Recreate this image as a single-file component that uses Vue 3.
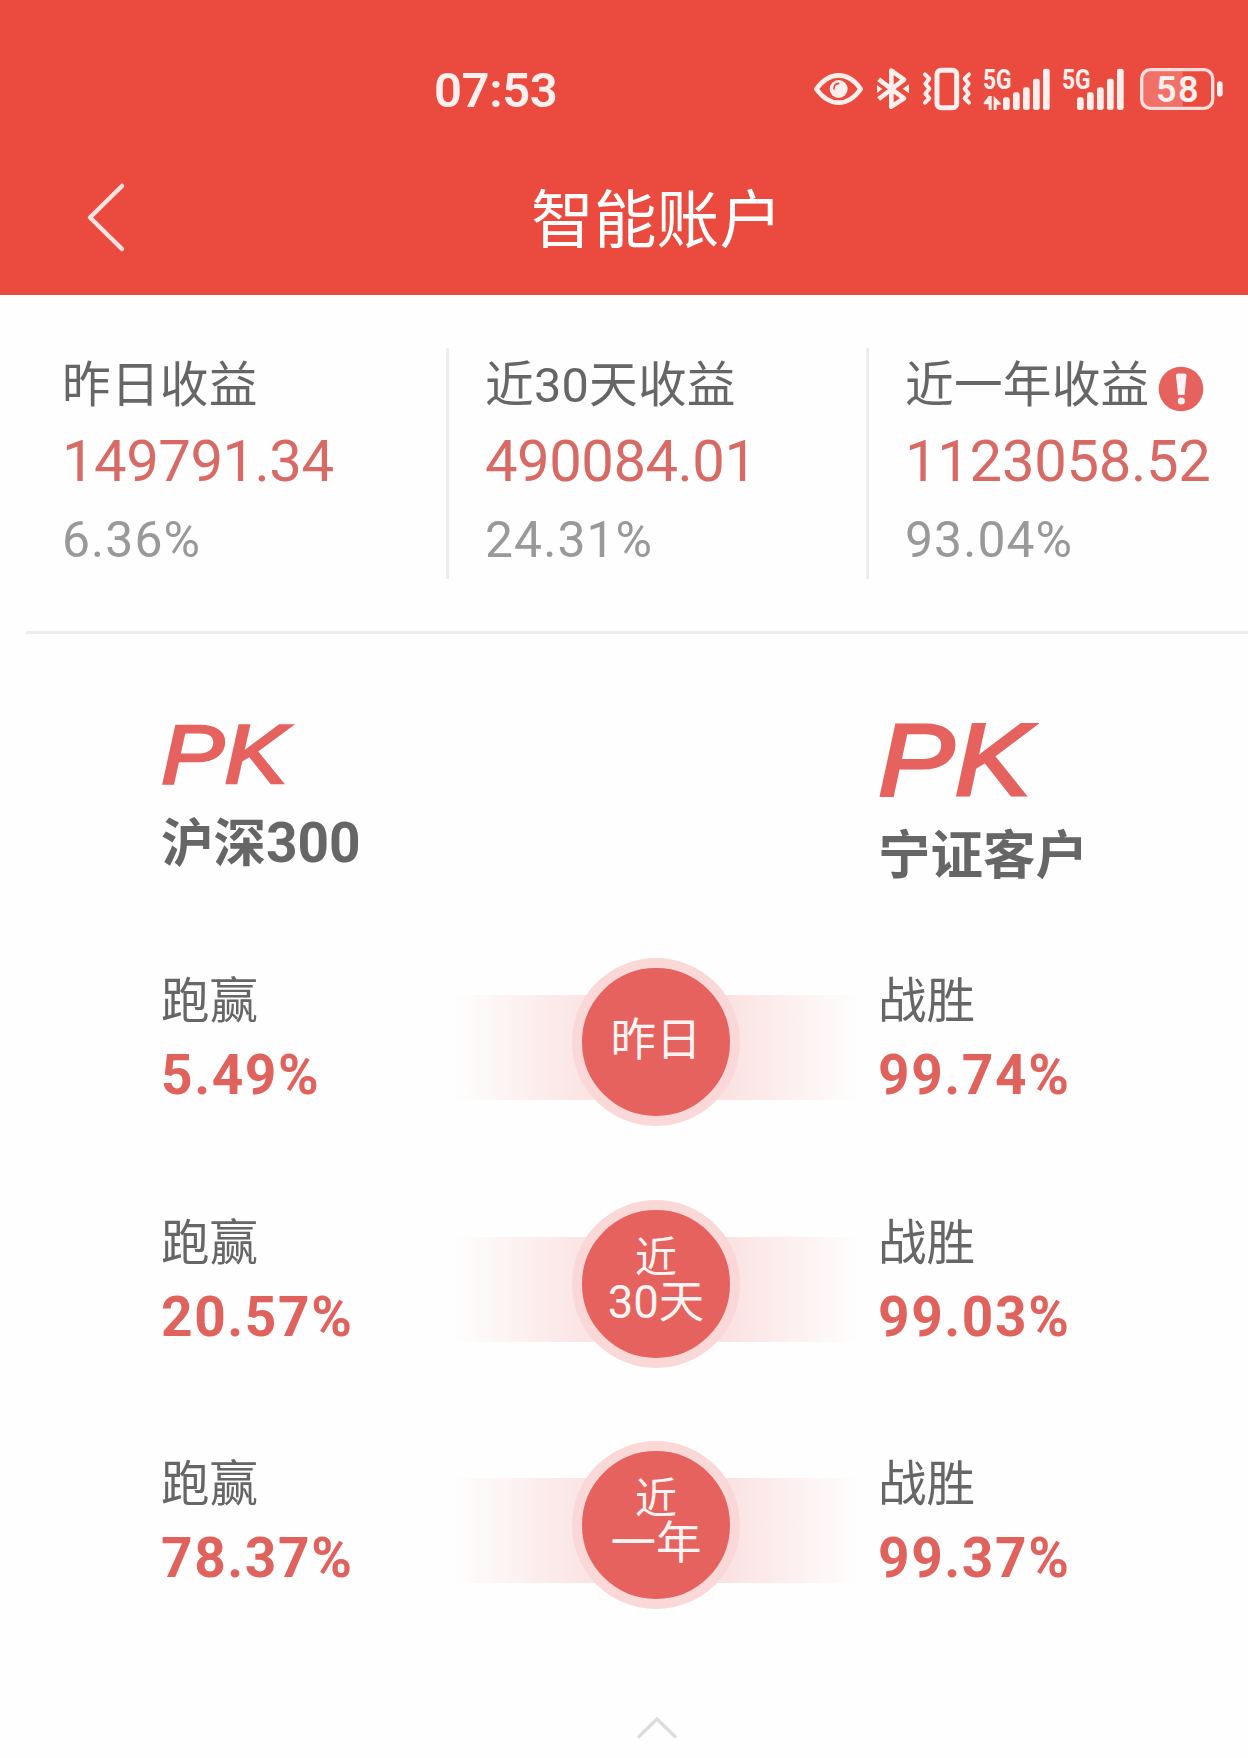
<template>
  <div class="page">
    <header class="header">
      <div class="status-bar">
        <span class="clock">07:53</span>

        <div class="status-icons">
          <svg width="50" height="42" viewBox="42 54 150 126">
            <path d="M49 117C70 88 92 76 116 76s46 12 66 41c-20 29-42 41-66 41s-46-12-67-41Z" fill="none" stroke="#fff0ee" stroke-width="14" stroke-linejoin="round" />
            <circle cx="116" cy="117" r="27" fill="#fff0ee" />
            <path d="M102 116c0-9 5-15 14-16" fill="none" stroke="#eb4a3e" stroke-width="5" stroke-linecap="round" />
          </svg>
          <svg width="32" height="42" viewBox="231 54 96 126">
            <g fill="none" stroke="#fff0ee" stroke-width="14" stroke-linejoin="round">
              <path d="M236 88l76 57-38 25V62l38 27-76 58" />
            </g>
            <path d="M327 103v27l-19-13.500zM231 105v24l16-12z" fill="#fff0ee" />
          </svg>
          <svg width="50" height="42" viewBox="366 54 150 126">
            <g fill="none" stroke="#fff0ee" stroke-linecap="round" stroke-linejoin="round">
              <rect x="411" y="61" width="59" height="112" rx="12" stroke-width="15" />
              <path d="M375 73l13 13-12 15 12 15-12 15 12 14-13 13M507 73l-13 13 12 15-12 15 12 15-12 14 13 13" stroke-width="12" />
            </g>
          </svg>
          <svg width="65" height="42" viewBox="555 54 195 126" fill="#fff0ee">
            <text x="549" y="116" class="net" textLength="86" lengthAdjust="spacingAndGlyphs">5G</text>
            <path d="M566 138h9v42h-9v-17h-15v-5zM581 138l21 21v5h-12v16h-9z" />
            <rect v-for="bar in signalBars" :key="bar.x" :x="bar.x + 609" :y="bar.y" width="20" :height="180 - bar.y" rx="7" />
          </svg>
          <svg width="62" height="42" viewBox="789 54 186 126" fill="#fff0ee">
            <text x="786" y="116" class="net" textLength="86" lengthAdjust="spacingAndGlyphs">5G</text>
            <rect v-for="bar in signalBars" :key="bar.x" :x="bar.x + 831" :y="bar.y" width="20" :height="180 - bar.y" rx="7" />
          </svg>
          <svg width="85" height="42" viewBox="1014 54 255 126">
            <path d="M1148 64h-98a22 22 0 0 0-22 22v62a22 22 0 0 0 22 22h98z" fill="#f17168" />
            <rect x="1025" y="59" width="213" height="116" rx="26" fill="none" stroke="#ffdedb" stroke-width="10" />
            <rect x="1251" y="94" width="17" height="46" rx="8.500" fill="#fff0ee" />
            <text x="1068" y="156" class="battery-text" textLength="128">58</text>
          </svg>
        </div>
      </div>

      <div class="nav-bar">
        <svg class="back" width="36" height="68" viewBox="0 0 36 68">
          <path d="M35 3L3 34.500l32 31.500" fill="none" stroke="#ffe3e0" stroke-width="4.500" stroke-linecap="round" stroke-linejoin="round" />
        </svg>
        <h1 class="title">智能账户</h1>
      </div>
    </header>

    <section class="stats">
      <div v-for="item in stats" :key="item.label" class="stat">
        <div class="stat-label">
          {{ item.label }}
          <svg v-if="item.hint" class="hint" width="46" height="46" viewBox="0 0 46 46">
            <circle cx="23" cy="23" r="22.300" fill="#e5625e" />
            <path d="M18 9.500q0-2 2-2h6.500q2 0 2 2L26.500 29h-6.500z" fill="#fff4f3" />
            <circle cx="23.300" cy="35" r="3.600" fill="#fff4f3" />
          </svg>
        </div>
        <div class="stat-amount">{{ item.amount }}</div>
        <div class="stat-rate">{{ item.rate }}</div>
      </div>
    </section>

    <section class="versus">
      <div class="heads">
        <div class="head">
          <span class="pk">PK</span>
          <span class="head-name">沪深<span class="head-number">300</span></span>
        </div>
        <div class="head head-large">
          <span class="pk">PK</span>
          <span class="head-name">宁证客户</span>
        </div>
      </div>

      <div v-for="row in rows" :key="row.win" class="row">
        <div class="score">
          <div class="score-label">跑赢</div>
          <div class="score-value">{{ row.win }}</div>
        </div>
        <div class="band">
          <div class="circle">
            <span v-if="row.prefix" class="circle-prefix">{{ row.prefix }}</span>
            <span class="circle-text">{{ row.period }}</span>
          </div>
        </div>
        <div class="score">
          <div class="score-label">战胜</div>
          <div class="score-value">{{ row.beat }}</div>
        </div>
      </div>
    </section>

    <footer class="collapse">
      <svg width="42" height="24" viewBox="0 0 42 24">
        <path d="M2 21.500L21 3l19 18.500" fill="none" stroke="#dcdcdc" stroke-width="3.200" />
      </svg>
    </footer>
  </div>
</template>

<script setup>
const signalBars = [
  { x: 0, y: 142 },
  { x: 30, y: 127 },
  { x: 60, y: 112 },
  { x: 90, y: 86 },
  { x: 120, y: 56 },
]

const stats = [
  { label: '昨日收益', amount: '149791.34', rate: '6.36%' },
  { label: '近30天收益', amount: '490084.01', rate: '24.31%' },
  { label: '近一年收益', amount: '1123058.52', rate: '93.04%', hint: true },
]

const rows = [
  { prefix: '', period: '昨日', win: '5.49%', beat: '99.74%' },
  { prefix: '近', period: '30天', win: '20.57%', beat: '99.03%' },
  { prefix: '近', period: '一年', win: '78.37%', beat: '99.37%' },
]
</script>

<style>
body {
  margin: 0;
  background: #fefefe;
}
</style>

<style scoped>
.page {
  width: 1248px;
  height: 1758px;
  overflow: hidden;
  background: #fefefe;
  color: #666;
  font-family: Roboto, "Noto Sans CJK SC", sans-serif;
}

svg {
  display: block;
  flex: none;
  overflow: visible;
}

.header {
  height: 295px;
  background: #eb4a3e;
  color: #fff;
}

.status-bar {
  display: flex;
  justify-content: space-between;
  padding: 68px 25px 0 434px;
  height: 42px;
}

.clock {
  color: #fff0ee;
  font-size: 49px;
  font-weight: 600;
  line-height: 45px;
  letter-spacing: -0.400px;
}

.status-icons {
  display: flex;
  gap: 13px;
}

.net {
  font-size: 84px;
  font-weight: 700;
}

.battery-text {
  fill: #fff0ee;
  font-size: 108px;
  font-weight: 600;
}

.nav-bar {
  display: flex;
  align-items: flex-start;
  height: 68px;
  padding: 73px 60px 0 87px;
}

.title {
  margin: 4px 0 0 408px;
  font-size: 62.800px;
  font-weight: 400;
  line-height: 68px;
}

.stats {
  display: grid;
  grid-template-columns: 449px 420px 1fr;
  padding: 53px 0 52px;
}

.stat {
  height: 231px;
  box-sizing: border-box;
  padding: 13px 0 0 36px;
  border-right: 3px solid #ededed;
  white-space: nowrap;
}

.stat:first-child {
  padding-left: 62px;
}

.stat:last-child {
  border-right: none;
}

.stat-label {
  display: flex;
  align-items: center;
  height: 49px;
  font-size: 48.700px;
  line-height: 49px;
  letter-spacing: 0.200px;
}

.hint {
  margin: 3px 0 -3px 9px;
}

.stat-amount {
  color: #d76a65;
  font-size: 58px;
  line-height: 103px;
  letter-spacing: -0.500px;
}

.stat:last-child .stat-amount {
  letter-spacing: -0.300px;
}

.stat-rate {
  color: #999;
  font-size: 49.800px;
  line-height: 55px;
  letter-spacing: 1.100px;
}

.versus {
  margin-left: 26px;
  border-top: 3px solid #ededed;
}

.heads {
  display: grid;
  grid-template-columns: 717px 1fr;
  height: 324px;
  padding: 90px 0 0 135px;
  box-sizing: border-box;
}

.head {
  display: flex;
  flex-direction: column;
}

.pk {
  color: #e5625e;
  font-family: "Liberation Sans", Arial, sans-serif;
  font-size: 84px;
  font-style: italic;
  line-height: 60px;
  -webkit-text-stroke: 2.600px #e5625e;
  transform: scaleX(1.13);
  transform-origin: left;
}

.head-large .pk {
  font-size: 101.500px;
  line-height: 72px;
  -webkit-text-stroke-width: 3px;
}

.head-name {
  margin-top: 30px;
  font-size: 52.500px;
  font-weight: 700;
  line-height: 60px;
}

.head-number {
  font-size: 55px;
  line-height: 1;
  letter-spacing: -0.100px;
}

.row {
  display: grid;
  grid-template-columns: 287px 416px 1fr;
  height: 168px;
  margin-bottom: 73.500px;
  padding-left: 135px;
}

.row .score:last-child {
  padding-left: 14px;
}

.score-label {
  margin-top: 19px;
  font-size: 48.500px;
  line-height: 49px;
}

.score-value {
  margin-top: 11px;
  color: #e0625d;
  font-size: 55px;
  font-weight: 700;
  line-height: 77px;
  letter-spacing: 1.600px;
}

.band {
  display: flex;
  align-items: center;
  justify-content: center;
  height: 105px;
  margin-top: 37px;
  background: linear-gradient(90deg, #fefefe 1%, #fbe4e4 33%, #fbe2e2 67%, #fefefe 99%);
}

/* the circle sits slightly above the middle of the band */
.circle {
  display: flex;
  flex: none;
  flex-direction: column;
  align-items: center;
  justify-content: center;
  width: 148px;
  height: 148px;
  margin-top: -11px;
  border: 10px solid #f9d8d7;
  border-radius: 50%;
  background: #e5625e;
  color: #fff4f3;
}

.circle-prefix {
  font-size: 42px;
  line-height: 46px;
}

.circle-text {
  padding-bottom: 8px;
  font-size: 45.500px;
  line-height: 44px;
}

.circle-text:first-child {
  padding-bottom: 2px;
}

.collapse {
  display: flex;
  justify-content: center;
  padding: 33px 0 0 66px;
}
</style>
